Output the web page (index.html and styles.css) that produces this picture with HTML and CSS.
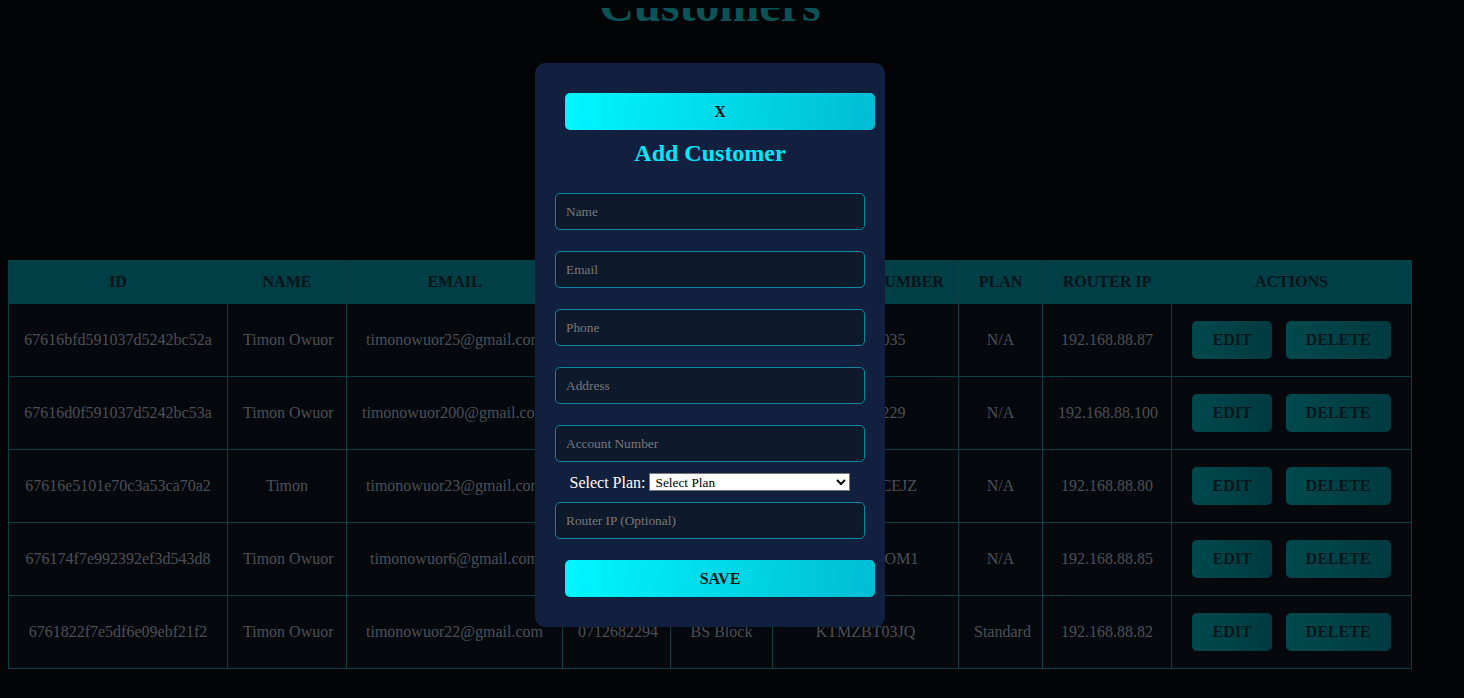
FILE: index.html
```html
<!DOCTYPE html>
<html lang="en">
<head>
<meta charset="utf-8">
<title>Customers</title>
<link rel="stylesheet" href="styles.css">
</head>
<body>
<div class="page">
  <h1 class="page-title">Customers</h1>
  <table class="customers">
    <colgroup>
      <col class="c-id"><col class="c-name"><col class="c-email"><col class="c-phone"><col class="c-addr"><col class="c-acc"><col class="c-plan"><col class="c-ip"><col class="c-act">
    </colgroup>
    <thead>
      <tr><th>ID</th><th>NAME</th><th>EMAIL</th><th>PHONE</th><th>ADDRESS</th><th>ACCOUNT NUMBER</th><th>PLAN</th><th>ROUTER IP</th><th>ACTIONS</th></tr>
    </thead>
    <tbody>
      <tr><td>67616bfd591037d5242bc52a</td><td>Timon Owuor</td><td>timonowuor25@gmail.com</td><td>0712682294</td><td>BS Block</td><td>0712345035</td><td>N/A</td><td>192.168.88.87</td><td><button class="btn-act">EDIT</button> <button class="btn-act">DELETE</button></td></tr>
      <tr><td>67616d0f591037d5242bc53a</td><td>Timon Owuor</td><td>timonowuor200@gmail.com</td><td>0712682294</td><td>BS Block</td><td>0798120229</td><td>N/A</td><td>192.168.88.100</td><td><button class="btn-act">EDIT</button> <button class="btn-act">DELETE</button></td></tr>
      <tr><td>67616e5101e70c3a53ca70a2</td><td>Timon</td><td>timonowuor23@gmail.com</td><td>0712682294</td><td>BS Block</td><td>KTM5YQCEJZ</td><td>N/A</td><td>192.168.88.80</td><td><button class="btn-act">EDIT</button> <button class="btn-act">DELETE</button></td></tr>
      <tr><td>676174f7e992392ef3d543d8</td><td>Timon Owuor</td><td>timonowuor6@gmail.com</td><td>0712682294</td><td>BS Block</td><td>KTMQX8IOM1</td><td>N/A</td><td>192.168.88.85</td><td><button class="btn-act">EDIT</button> <button class="btn-act">DELETE</button></td></tr>
      <tr><td>6761822f7e5df6e09ebf21f2</td><td>Timon Owuor</td><td>timonowuor22@gmail.com</td><td>0712682294</td><td>BS Block</td><td>KTMZBT03JQ</td><td>Standard</td><td>192.168.88.82</td><td><button class="btn-act">EDIT</button> <button class="btn-act">DELETE</button></td></tr>
    </tbody>
  </table>

  <div class="modal">
    <button class="btn-grad btn-close">X</button>
    <h2 class="modal-title">Add Customer</h2>
    <form class="modal-form">
      <input class="field" type="text" placeholder="Name">
      <input class="field" type="text" placeholder="Email">
      <input class="field" type="text" placeholder="Phone">
      <input class="field" type="text" placeholder="Address">
      <input class="field" type="text" placeholder="Account Number">
      <div class="plan-row">
        <label class="plan-label">Select Plan:</label>
        <select class="plan-select"><option>Select Plan</option></select>
      </div>
      <input class="field" type="text" placeholder="Router IP (Optional)">
      <button class="btn-grad btn-save" type="button">SAVE</button>
    </form>
  </div>
</div>
</body>
</html>
```

FILE: styles.css
```css
html, body {
  background: #030406;
}
body {
  margin: 8px;
  font-family: "Liberation Serif", "Times New Roman", serif;
  font-size: 16px;
}
.page {
  position: relative;
  display: flex;
  flex-direction: column;
  width: fit-content;
}
.page-title {
  margin: -31px 0 228px;
  font-size: 48px;
  font-weight: bold;
  line-height: normal;
  text-align: center;
  color: #0b5357;
}
.customers {
  border-collapse: collapse;
  table-layout: fixed;
  width: 1403px;
  background: #05080d;
}
.c-id { width: 219px; }
.c-name { width: 119px; }
.c-email { width: 216px; }
.c-phone { width: 108px; }
.c-addr { width: 102px; }
.c-acc { width: 186px; }
.c-plan { width: 84px; }
.c-ip { width: 129px; }
.c-act { width: 240px; }
.customers th,
.customers td {
  border: 1px solid #0a3f44;
  padding: 12px 15px;
  text-align: center;
  vertical-align: middle;
  white-space: nowrap;
  overflow: hidden;
}
.customers th {
  background: #003f45;
  color: #021418;
  font-weight: bold;
  height: 18px;
}
.customers td {
  color: #4b5056;
  height: 48px;
}
.btn-act {
  margin: 5px;
  padding: 10px 20px;
  border: none;
  border-radius: 5px;
  background: linear-gradient(90deg, #00494d, #003a40);
  color: #01161a;
  font-family: "Liberation Serif", "Times New Roman", serif;
  font-size: 16px;
  font-weight: bold;
  height: 38px;
}
.modal {
  position: absolute;
  top: 55px;
  left: calc(50% - 175px);
  width: 310px;
  padding: 20px;
  background: #11203f;
  border-radius: 10px;
}
.btn-grad {
  display: block;
  width: 310px;
  height: 37px;
  margin: 10px 0 10px 10px;
  padding: 0;
  border: none;
  border-radius: 5px;
  background: linear-gradient(100deg, #00f7ff, #00bcd4);
  color: #03161c;
  font-family: "Liberation Serif", "Times New Roman", serif;
  font-size: 16px;
  font-weight: bold;
}
.modal-title {
  margin: 0 0 16px;
  font-size: 24px;
  font-weight: bold;
  line-height: normal;
  text-align: center;
  color: #00e8ff;
}
.modal-form {
  display: flex;
  flex-direction: column;
  margin: 0;
}
.field {
  box-sizing: border-box;
  width: 310px;
  height: 37px;
  margin: 10px 0 11px;
  padding: 0 10px;
  border: 1px solid #0b88a0;
  border-radius: 5px;
  background: #0e1a2b;
  color: #ddd;
  font-family: "Liberation Serif", "Times New Roman", serif;
  font-size: 13.333px;
}
.field::placeholder {
  color: #787878;
}
.plan-row {
  display: flex;
  justify-content: center;
  align-items: flex-start;
  gap: 4px;
  height: 19px;
}
.plan-label {
  color: #ffffff;
  font-size: 16px;
  line-height: 19px;
}
.plan-select {
  box-sizing: border-box;
  width: 201px;
  height: 18px;
  margin: 0;
  font-family: "Liberation Serif", "Times New Roman", serif;
  font-size: 13.333px;
  background: #ffffff;
  color: #000;
  border: 1px solid #767676;
  border-radius: 0;
  padding: 0 0 0 1px;
}
.btn-save {
  margin-top: 10px;
}
```
